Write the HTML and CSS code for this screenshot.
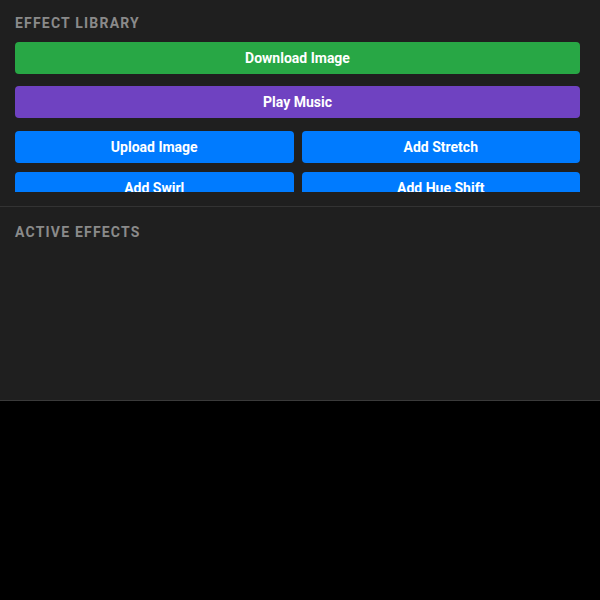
FILE: index.html
```html
<!DOCTYPE html>
<html lang="en">
<head>
<meta charset="utf-8">
<title>Effects</title>
<link rel="stylesheet" href="styles.css">
</head>
<body>
<div class="panel">
  <section class="section library">
    <h2 class="section-title">Effect Library</h2>
    <div class="scroll">
      <button class="btn btn-green">Download Image</button>
      <button class="btn btn-purple">Play Music</button>
      <div class="grid">
        <button class="btn btn-blue">Upload Image</button>
        <button class="btn btn-blue">Add Stretch</button>
        <button class="btn btn-blue">Add Swirl</button>
        <button class="btn btn-blue">Add Hue Shift</button>
      </div>
    </div>
  </section>
  <section class="section active">
    <h2 class="section-title">Active Effects</h2>
  </section>
</div>
</body>
</html>
```

FILE: styles.css
```css
html, body {
  margin: 0;
  padding: 0;
  background: #000;
  font-family: Roboto, "Liberation Sans", sans-serif;
}

.panel {
  width: 600px;
  background: #1f1f1f;
  border-bottom: 1px solid #3a3a3a;
}

.section {
  box-sizing: border-box;
}

.library {
  padding: 15px 20px 14px 15px;
  border-bottom: 1px solid #333;
}

.active {
  padding: 17px 20px 0 15px;
  height: 193px;
}

.section-title {
  margin: 0 0 11px 0;
  font-size: 14px;
  line-height: 16px;
  font-weight: 700;
  letter-spacing: 1.2px;
  text-transform: uppercase;
  color: #8a8a8a;
}

.scroll {
  height: 150px;
  overflow: hidden;
  display: flex;
  flex-direction: column;
  gap: 12px;
}

.grid {
  display: grid;
  grid-template-columns: 1fr 1fr;
  column-gap: 8px;
  row-gap: 9px;
  margin-top: 1px;
}

.btn {
  display: block;
  width: 100%;
  height: 32px;
  flex: none;
  border: none;
  border-radius: 4px;
  color: #fff;
  font-family: Roboto, "Liberation Sans", sans-serif;
  font-size: 14px;
  font-weight: 700;
  padding: 0;
  cursor: pointer;
}

.btn-green { background: #28a745; }
.btn-purple { background: #6f42c1; }
.btn-blue { background: #007bff; }
```
